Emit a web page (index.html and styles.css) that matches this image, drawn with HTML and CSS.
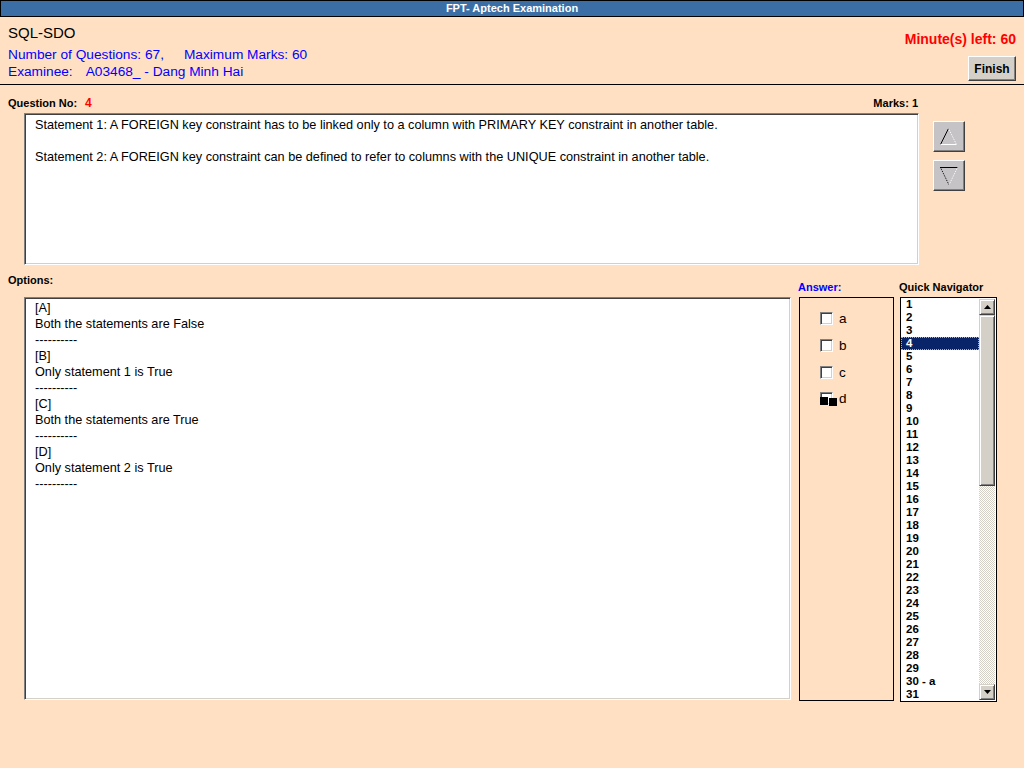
FILE: index.html
```html
<!DOCTYPE html>
<html>
<head>
<meta charset="utf-8">
<title>FPT- Aptech Examination</title>
<link rel="stylesheet" href="styles.css">
</head>
<body>
<div class="titlebar">FPT- Aptech Examination</div>
<header class="head">
  <div class="head-left">
    <div class="subject">SQL-SDO</div>
    <div class="info"><span>Number of Questions: 67,</span><span class="max">Maximum Marks: 60</span></div>
    <div class="info"><span>Examinee:</span><span class="exam">A03468_ - Dang Minh Hai</span></div>
  </div>
  <div class="head-right">
    <div class="timer">Minute(s) left: 60</div>
    <button class="btn finish">Finish</button>
  </div>
</header>
<section class="question">
  <div class="qmain">
    <div class="qbar"><span>Question No: <span class="qno">4</span></span><span>Marks: 1</span></div>
    <div class="qbox sunken">
      <p>Statement 1: A FOREIGN key constraint has to be linked only to a column with PRIMARY KEY constraint in another table.</p>
      <p>Statement 2: A FOREIGN key constraint can be defined to refer to columns with the UNIQUE constraint in another table.</p>
    </div>
  </div>
  <div class="arrows">
    <button class="btn arrow" aria-label="Previous">
      <svg width="20" height="18" viewBox="0 0 20 18"><line x1="1.5" y1="16.5" x2="9.5" y2="0.5" stroke="#000" stroke-width="1"/><line x1="9.5" y1="0.5" x2="17.5" y2="16.5" stroke="#fff" stroke-width="1" stroke-dasharray="1 1"/><line x1="1.5" y1="16.5" x2="17.5" y2="16.5" stroke="#fff" stroke-width="1"/></svg>
    </button>
    <button class="btn arrow" aria-label="Next">
      <svg width="20" height="20" viewBox="0 0 20 20"><line x1="1" y1="1.5" x2="19" y2="1.5" stroke="#000" stroke-width="1"/><line x1="1.5" y1="1.5" x2="10" y2="19" stroke="#000" stroke-width="1" stroke-dasharray="1 1"/><line x1="18.5" y1="1.5" x2="10" y2="19" stroke="#fff" stroke-width="1" stroke-dasharray="1 1"/></svg>
    </button>
  </div>
</section>
<section class="bottom">
  <div class="optcol">
    <div class="label">Options:</div>
    <div class="optbox sunken">
      <div>[A]</div>
      <div>Both the statements are False</div>
      <div>----------</div>
      <div>[B]</div>
      <div>Only statement 1 is True</div>
      <div>----------</div>
      <div>[C]</div>
      <div>Both the statements are True</div>
      <div>----------</div>
      <div>[D]</div>
      <div>Only statement 2 is True</div>
      <div>----------</div>
    </div>
  </div>
  <div class="anscol">
    <div class="label blue">Answer:</div>
    <div class="ansbox">
      <div class="ans"><span class="chk"></span><span>a</span></div>
      <div class="ans"><span class="chk"></span><span>b</span></div>
      <div class="ans"><span class="chk"></span><span>c</span></div>
      <div class="ans"><span class="chk glitch"><i class="blk b1"></i><i class="blk b2"></i></span><span>d</span></div>
    </div>
  </div>
  <div class="navcol">
    <div class="label">Quick Navigator</div>
    <div class="navbox">
      <ul class="navlist">
        <li>1</li><li>2</li><li>3</li><li class="sel">4</li><li>5</li><li>6</li><li>7</li><li>8</li><li>9</li><li>10</li>
        <li>11</li><li>12</li><li>13</li><li>14</li><li>15</li><li>16</li><li>17</li><li>18</li><li>19</li><li>20</li>
        <li>21</li><li>22</li><li>23</li><li>24</li><li>25</li><li>26</li><li>27</li><li>28</li><li>29</li><li>30 - a</li>
        <li>31</li>
      </ul>
      <div class="scroll">
        <div class="sbtn"><svg width="7" height="4" viewBox="0 0 7 4"><path d="M3.5 0 L7 4 L0 4 Z" fill="#000"/></svg></div>
        <div class="thumb"></div>
        <div class="track"></div>
        <div class="sbtn"><svg width="7" height="4" viewBox="0 0 7 4"><path d="M0 0 L7 0 L3.5 4 Z" fill="#000"/></svg></div>
      </div>
    </div>
  </div>
</section>
</body>
</html>
```

FILE: styles.css
```css
* { box-sizing: border-box; }
html, body { margin: 0; padding: 0; }
body {
  width: 1024px;
  height: 768px;
  overflow: hidden;
  background: #ffe0c2;
  font-family: "Liberation Sans", Arial, sans-serif;
  color: #000;
}
.titlebar {
  height: 17px;
  background: #3a6ea5;
  border: 1px solid #000;
  color: #fff;
  font-weight: bold;
  font-size: 11px;
  line-height: 15px;
  text-align: center;
}
.head {
  display: flex;
  justify-content: space-between;
  height: 68px;
  border-bottom: 1px solid #000;
  padding: 7px 8px 0 8px;
}
.subject {
  font-size: 15px;
  line-height: 18px;
  margin-bottom: 4px;
}
.info {
  color: #0000ff;
  font-size: 13.7px;
  line-height: 17px;
  white-space: pre;
}
.info .max { margin-left: 20px; }
.info .exam { margin-left: 13px; }
.head-right {
  display: flex;
  flex-direction: column;
  align-items: flex-end;
  padding-top: 7px;
}
.timer {
  color: #ff0000;
  font-weight: bold;
  font-size: 14px;
  line-height: 17px;
  margin-bottom: 8px;
}
.btn {
  background: #d4d0c8;
  border: 1px solid;
  border-color: #fff #404040 #404040 #fff;
  box-shadow: inset -1px -1px #808080;
  padding: 0;
  font-family: "Liberation Sans", Arial, sans-serif;
  display: flex;
  align-items: center;
  justify-content: center;
}
.finish {
  width: 48px;
  height: 25px;
  font-weight: bold;
  font-size: 12px;
  color: #000;
}
.question {
  display: flex;
  padding: 11px 0 0 8px;
}
.qmain { width: 910px; }
.qbar {
  display: flex;
  justify-content: space-between;
  font-weight: bold;
  font-size: 11px;
  line-height: 14px;
  margin-bottom: 3px;
}
.qno { color: #ff0000; margin-left: 5px; font-size: 12px; }
.sunken {
  background: #fff;
  border: 1px solid;
  border-color: #808080 #fff #fff #808080;
  box-shadow: inset 1px 1px #404040, inset -1px -1px #d4d0c8;
}
.qbox {
  margin-left: 16px;
  width: 895px;
  height: 152px;
  padding: 3px 10px;
  font-size: 12.7px;
  line-height: 16px;
}
.qbox p { margin: 0 0 16px 0; }
.arrows {
  display: flex;
  flex-direction: column;
  gap: 8px;
  margin-left: 15px;
  padding-top: 25px;
}
.arrow {
  width: 32px;
  height: 31px;
  background: #c6c3c6;
}
.bottom {
  display: flex;
  margin-top: 8px;
  padding-left: 8px;
}
.label {
  font-weight: bold;
  font-size: 11px;
  line-height: 14px;
}
.blue { color: #0000ff; }
.optcol { width: 783px; }
.optcol .label { margin-bottom: 10px; }
.optbox {
  margin-left: 16px;
  height: 403px;
  padding: 2px 10px;
  font-size: 12.7px;
  line-height: 16px;
}
.anscol { width: 96px; margin-left: 7px; }
.anscol .label, .navcol .label { padding-top: 7px; margin-bottom: 3px; }
.ansbox {
  margin-left: 1px;
  width: 95px;
  height: 404px;
  border: 1px solid #000;
  padding-top: 14px;
}
.ans {
  display: flex;
  align-items: center;
  height: 13px;
  margin: 0 0 14px 20px;
  font-size: 13.5px;
}
.ans:nth-child(4) { margin-top: -1px; }
.chk {
  position: relative;
  width: 13px;
  height: 13px;
  margin-right: 6px;
  background: #fff;
  border: 1px solid;
  border-color: #808080 #fff #fff #808080;
  box-shadow: inset 1px 1px #404040, inset -1px -1px #d4d0c8;
}
.blk {
  position: absolute;
  background: #000;
  width: 8px;
  height: 8px;
}
.b1 { left: -1px; top: 4px; }
.b2 { left: 8px; top: 5px; }
.navcol { width: 98px; margin-left: 5px; }
.navbox {
  margin-left: 1px;
  width: 97px;
  height: 405px;
  border: 1px solid #000;
  background: #fff;
  display: flex;
  overflow: hidden;
}
.navlist {
  list-style: none;
  margin: 0;
  padding: 0;
  flex: 1;
  overflow: hidden;
  font-weight: bold;
  font-size: 11.5px;
}
.navlist li {
  height: 13px;
  line-height: 13px;
  padding-left: 5px;
}
.navlist li.sel {
  background: #0a246a;
  color: #fff;
  outline: 1px dotted #b0b0b0;
  outline-offset: -1px;
}
.scroll {
  width: 16px;
  display: flex;
  flex-direction: column;
  margin: 1px 1px 1px 0;
}
.sbtn, .thumb {
  background: #d4d0c8;
  border: 1px solid;
  border-color: #d4d0c8 #404040 #404040 #d4d0c8;
  box-shadow: inset 1px 1px #fff, inset -1px -1px #808080;
}
.sbtn {
  height: 16px;
  display: flex;
  align-items: center;
  justify-content: center;
}
.thumb { height: 171px; }
.track {
  flex: 1;
  background: repeating-conic-gradient(#d4d0c8 0 25%, #fff 0 50%) 0 0 / 2px 2px;
}
```
